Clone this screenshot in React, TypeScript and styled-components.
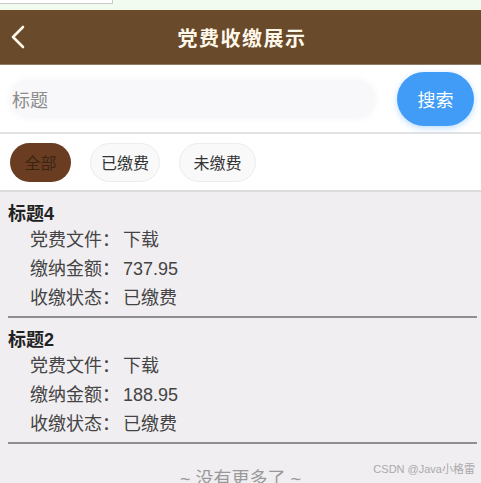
import React from "react";
import styled, { createGlobalStyle } from "styled-components";

const Global = createGlobalStyle`
  html, body { margin: 0; padding: 0; }
  body {
    background: #f0eef1;
    font-family: "Liberation Sans", Arial, "Noto Sans CJK SC", sans-serif;
    width: 481px;
    height: 483px;
    overflow: hidden;
  }
`;

const Page = styled.div`
  position: relative;
  width: 481px;
  height: 483px;
  overflow: hidden;
  background: #f0eef1;
`;

const TopStrip = styled.div`
  height: 10px;
  background: #f1fbf0;
`;

const TabStub = styled.div`
  width: 112px;
  height: 3px;
  background: #fff;
  border: 1px solid #c9c9c9;
  border-top: none;
  border-left: none;
`;

const Header = styled.div`
  height: 54px;
  background: #694a2a;
  display: grid;
  grid-template-columns: 50px 1fr 50px;
  align-items: center;
  border-bottom: 1px solid #8a7a66;
`;

const BackBtn = styled.div`
  display: flex;
  align-items: center;
  padding-left: 9px;
`;

const Title = styled.div`
  text-align: center;
  color: #fff8ea;
  font-size: 20px;
  font-weight: bold;
  letter-spacing: 1.5px;
  padding-left: 3px;
`;

const SearchBar = styled.div`
  height: 67px;
  background: #fff;
  display: flex;
  align-items: center;
  padding: 0 7px 0 10px;
  gap: 22px;
  border-bottom: 2px solid #e2e2e4;
`;

const SearchInput = styled.div`
  flex: 1;
  height: 38px;
  border-radius: 19px;
  background: #f8f8fa;
  box-shadow: 0 0 6px 2px #f8f8fa;
  display: flex;
  align-items: center;
  padding-left: 2px;
  color: #8c8c8c;
  font-size: 18px;
`;

const SearchButton = styled.div`
  width: 77px;
  height: 54px;
  border-radius: 27px;
  background: #409cf6;
  box-shadow: 0 2px 6px rgba(64, 156, 246, 0.35);
  color: #fff;
  font-size: 18px;
  display: flex;
  align-items: center;
  justify-content: center;
`;

const FilterRow = styled.div`
  height: 56px;
  background: #fff;
  display: flex;
  align-items: center;
  padding-left: 10px;
  gap: 19px;
  border-bottom: 2px solid #dcdcdc;
`;

const Chip = styled.div<{ $active?: boolean; $w: number }>`
  width: ${(p) => p.$w}px;
  height: 39px;
  box-sizing: border-box;
  border-radius: 20px;
  display: flex;
  align-items: center;
  justify-content: center;
  font-size: 16px;
  background: ${(p) => (p.$active ? "#6a3d22" : "#f9f9fa")};
  color: ${(p) => (p.$active ? "#3a2412" : "#333")};
  border: ${(p) => (p.$active ? "none" : "1.5px solid #ececee")};
`;

const List = styled.div`
  background: #f0eef1;
  padding: 0 4px 0 8px;
`;

const Item = styled.div`
  padding-top: 10px;
  border-bottom: 2px solid #8f8f8f;
  padding-bottom: 3px;
`;

const ItemTitle = styled.div`
  font-size: 18px;
  font-weight: bold;
  color: #222;
  line-height: 24px;
`;

const Field = styled.div`
  font-size: 18px;
  color: #444;
  line-height: 29px;
  padding-left: 22px;
`;

const Value = styled.span`
  margin-left: 3px;
`;

const NoMore = styled.div`
  text-align: center;
  color: #999;
  font-size: 18px;
  margin-top: 20px;
  padding-right: 4px;
`;

const Watermark = styled.div`
  position: absolute;
  right: 6px;
  bottom: 7px;
  font-size: 11px;
  color: #aaa;
`;

const items = [
  { title: "标题4", amount: "737.95", status: "已缴费" },
  { title: "标题2", amount: "188.95", status: "已缴费" },
];

export default function App() {
  return (
    <Page>
      <Global />
      <TopStrip>
        <TabStub />
      </TopStrip>
      <Header>
        <BackBtn>
          <svg width="18" height="26" viewBox="0 0 18 26">
            <path d="M14 3 L4 13 L14 23" fill="none" stroke="#fff6e8" strokeWidth="2.6" strokeLinecap="round" strokeLinejoin="round" />
          </svg>
        </BackBtn>
        <Title>党费收缴展示</Title>
        <div />
      </Header>
      <SearchBar>
        <SearchInput>标题</SearchInput>
        <SearchButton>搜索</SearchButton>
      </SearchBar>
      <FilterRow>
        <Chip $active $w={61}>全部</Chip>
        <Chip $w={70}>已缴费</Chip>
        <Chip $w={77}>未缴费</Chip>
      </FilterRow>
      <List>
        {items.map((it) => (
          <Item key={it.title}>
            <ItemTitle>{it.title}</ItemTitle>
            <Field>党费文件：<Value>下载</Value></Field>
            <Field>缴纳金额：<Value>{it.amount}</Value></Field>
            <Field>收缴状态：<Value>{it.status}</Value></Field>
          </Item>
        ))}
        <NoMore>~ 没有更多了 ~</NoMore>
      </List>
      <Watermark>CSDN @Java小格雷</Watermark>
    </Page>
  );
}
